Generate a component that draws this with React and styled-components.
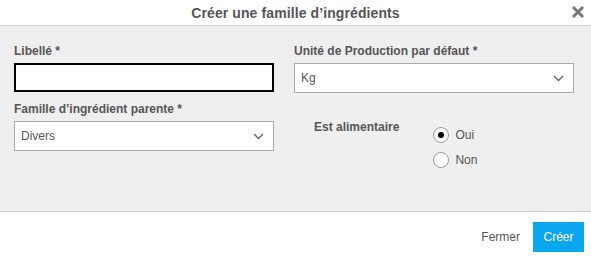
import React from "react";
import styled, { createGlobalStyle } from "styled-components";

const GlobalStyle = createGlobalStyle`
  html, body {
    margin: 0;
    padding: 0;
    background: #ffffff;
    font-family: "Liberation Sans", Arial, sans-serif;
  }
`;

const ChevronDown = () => (
  <svg width="11" height="7" viewBox="0 0 11 7">
    <path d="M1 1l4.5 4.5L10 1" fill="none" stroke="#666" strokeWidth="1.4" />
  </svg>
);

const App = () => {
  return (
    <>
      <GlobalStyle />
      <Modal>
        <Header>
          <Title>Créer une famille d’ingrédients</Title>
          <CloseButton aria-label="Fermer">
            <svg width="12" height="12" viewBox="0 0 12 12">
              <path d="M2 2l8 8M10 2l-8 8" stroke="#777" strokeWidth="3" strokeLinecap="square" />
            </svg>
          </CloseButton>
        </Header>

        <Body>
          <Field>
            <Label>Libellé *</Label>
            <TextInput type="text" />
          </Field>
          <Field>
            <Label>Unité de Production par défaut *</Label>
            <Select>
              <span>Kg</span>
              <ChevronDown />
            </Select>
          </Field>
          <Field>
            <Label>Famille d’ingrédient parente *</Label>
            <Select>
              <span>Divers</span>
              <ChevronDown />
            </Select>
          </Field>
          <RadioField>
            <Label>Est alimentaire</Label>
            <RadioGroup>
              <RadioRow>
                <Radio checked />
                <span>Oui</span>
              </RadioRow>
              <RadioRow>
                <Radio />
                <span>Non</span>
              </RadioRow>
            </RadioGroup>
          </RadioField>
        </Body>

        <Footer>
          <LinkButton>Fermer</LinkButton>
          <PrimaryButton>Créer</PrimaryButton>
        </Footer>
      </Modal>
    </>
  );
};

export default App;

const Modal = styled.div`
  width: 591px;
  height: 262px;
  display: flex;
  flex-direction: column;
  background: #fff;
`;

const Header = styled.div`
  position: relative;
  height: 25px;
  display: flex;
  align-items: center;
  justify-content: center;
  border-bottom: 1px solid #cfcfcf;
`;

const Title = styled.h1`
  margin: 0;
  font-size: 14px;
  font-weight: bold;
  color: #555;
  letter-spacing: 0.1px;
`;

const CloseButton = styled.button`
  position: absolute;
  right: 7px;
  top: 6px;
  padding: 0;
  border: none;
  background: none;
  display: flex;
`;

const Body = styled.div`
  height: 186px;
  box-sizing: border-box;
  background: #efefef;
  border-bottom: 1px solid #cccccc;
  padding: 18px 17px 0 14px;
  display: grid;
  grid-template-columns: 260px 280px;
  column-gap: 20px;
  row-gap: 9px;
  align-content: start;
`;

const Field = styled.div`
  display: flex;
  flex-direction: column;
  gap: 5px;
`;

const Label = styled.label`
  font-size: 12px;
  font-weight: bold;
  color: #555;
  line-height: 14px;
`;

const TextInput = styled.input`
  box-sizing: border-box;
  height: 29px;
  width: 100%;
  margin: 0;
  border: 2px solid #000;
  background: #fff;
  outline: none;
`;

const Select = styled.div`
  box-sizing: border-box;
  height: 30px;
  width: 100%;
  border: 1px solid #aaa;
  background: #fff;
  display: flex;
  align-items: center;
  justify-content: space-between;
  padding: 0 9px 0 6px;
  font-size: 12px;
  color: #555;
`;

const RadioField = styled.div`
  display: flex;
  padding: 18px 0 0 20px;
`;

const RadioGroup = styled.div`
  display: flex;
  flex-direction: column;
  gap: 9px;
  margin-left: 34px;
  padding-top: 7px;
`;

const RadioRow = styled.div`
  display: flex;
  align-items: center;
  gap: 6px;
  font-size: 12px;
  color: #555;
`;

const Radio = styled.span`
  box-sizing: border-box;
  width: 16px;
  height: 16px;
  border-radius: 50%;
  border: 1px solid #9a9a9a;
  background: #fff;
  display: flex;
  align-items: center;
  justify-content: center;

  &::after {
    content: "";
    width: 6px;
    height: 6px;
    border-radius: 50%;
    background: ${({ checked }) => (checked ? "#000" : "transparent")};
  }
`;

const Footer = styled.div`
  flex: 1;
  display: flex;
  align-items: center;
  justify-content: flex-end;
  gap: 13px;
  padding: 0 7px 0 0;
`;

const LinkButton = styled.button`
  border: none;
  background: none;
  padding: 0;
  font-family: inherit;
  font-size: 12px;
  color: #555;
`;

const PrimaryButton = styled.button`
  border: none;
  background: #0aa6ee;
  color: #fff;
  font-family: inherit;
  font-size: 12px;
  width: 51px;
  height: 30px;
  padding: 0;
`;
